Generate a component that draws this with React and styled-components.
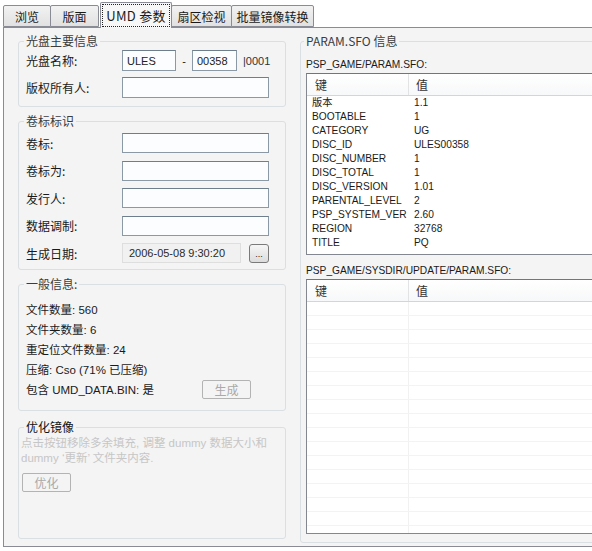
import React from "react";
import styled, { createGlobalStyle } from "styled-components";

const Global = createGlobalStyle`
  body {
    margin: 0;
    background: #ffffff;
  }
`;

const Root = styled.div`
  width: 592px;
  height: 551px;
  overflow: hidden;
  font-family: "Liberation Sans", "Noto Sans CJK SC", sans-serif;
  font-size: 11px;
  color: #1a1a1a;
`;

const TabBar = styled.div`
  display: flex;
  align-items: flex-end;
  height: 27px;
  padding-left: 3px;
  position: relative;
  z-index: 1;
`;

const Tab = styled.div`
  box-sizing: border-box;
  width: ${(p) => p.$w}px;
  height: ${(p) => (p.$active ? 26 : 22)}px;
  margin-left: ${(p) => p.$ml}px;
  margin-bottom: ${(p) => (p.$active ? -1 : 0)}px;
  border: 1px solid #898c95;
  border-bottom: ${(p) => (p.$active ? "none" : "1px solid #898c95")};
  border-radius: 2px 2px 0 0;
  background: ${(p) =>
    p.$active ? "#f7f7f7" : "linear-gradient(#f2f2f2, #e1e1e1)"};
  font-family: "Noto Sans CJK SC", sans-serif;
  font-size: 12px;
  color: #1a1a1a;
  display: flex;
  align-items: center;
  justify-content: center;
  padding: ${(p) => (p.$active ? "1px" : "0")};
`;

const Focus = styled.span`
  flex: 1;
  align-self: stretch;
  display: flex;
  align-items: center;
  justify-content: center;
  border: 1px dotted #222;
  font-size: 13px;
  letter-spacing: 0.3px;
`;

const Panel = styled.div`
  box-sizing: border-box;
  margin-left: 3px;
  width: 660px;
  height: 520px;
  border: 1px solid #898c95;
  background: #f4f4f4;
  display: flex;
  align-items: flex-start;
  gap: 14px;
  padding: 6px 0 0 14px;
`;

const LeftCol = styled.div`
  width: 268px;
  display: flex;
  flex-direction: column;
`;

const Group = styled.fieldset`
  box-sizing: border-box;
  margin: ${(p) => p.$mt || 0}px 0 0;
  padding: ${(p) => p.$pad};
  width: ${(p) => p.$w || 268}px;
  height: ${(p) => (p.$h ? `${p.$h}px` : "auto")};
  border: 1px solid #d9dfe3;
  border-radius: 3px;
  min-width: 0;
`;

const Legend = styled.legend`
  padding: 0 2px;
  margin-left: -2px;
  font-family: "Noto Sans CJK SC", sans-serif;
  font-size: 12px;
  line-height: ${(p) => p.$lh || 14}px;
  color: ${(p) => p.$color || "#3c3c3c"};
`;

const FormRows = styled.div`
  display: flex;
  flex-direction: column;
  gap: ${(p) => p.$gap}px;
`;

const Row = styled.div`
  display: flex;
  align-items: center;
  height: ${(p) => p.$h}px;
`;

const Label = styled.span`
  width: 96px;
  flex-shrink: 0;
  font-family: "Noto Sans CJK SC", sans-serif;
  font-size: 12px;
  color: #1a1a1a;
`;

const Input = styled.div`
  box-sizing: border-box;
  width: ${(p) => p.$w}px;
  height: 100%;
  border: 1px solid #8b99a6;
  border-top-color: #6f7e8c;
  background: #fbfdff;
  padding-left: 4px;
  display: flex;
  align-items: center;
  font-size: 11px;
  color: #222;
`;

const Dash = styled.span`
  width: 16px;
  text-align: center;
`;

const Suffix = styled.span`
  margin-left: 6px;
  color: #333;
`;

const DateField = styled.div`
  box-sizing: border-box;
  width: 119px;
  height: 100%;
  border: 1px solid #dedede;
  background: #f1f1f1;
  padding-left: 6px;
  display: flex;
  align-items: center;
  color: #2a2a2a;
`;

const DotsButton = styled.div`
  box-sizing: border-box;
  width: 20px;
  height: 19px;
  margin-left: 8px;
  border: 1px solid #7a7a7a;
  border-radius: 3px;
  background: linear-gradient(#f6f6f6, #dcdcdc);
  display: flex;
  align-items: flex-end;
  justify-content: center;
  padding-bottom: 3px;
  font-size: 9px;
  line-height: 9px;
  color: #222;
`;

const InfoLines = styled.div`
  display: flex;
  flex-direction: column;
`;

const InfoLine = styled.div`
  height: 20px;
  display: flex;
  align-items: center;
  font-size: 11.5px;
`;

const InfoText = styled.span`
  width: ${(p) => (p.$w ? `${p.$w}px` : "auto")};
  flex-shrink: 0;
`;

const SmallButton = styled.div`
  box-sizing: border-box;
  width: 49px;
  height: 19px;
  margin-left: ${(p) => p.$ml || 0}px;
  margin-top: ${(p) => p.$mt || 0}px;
  border: 1px solid #b3b3b3;
  border-radius: 2px;
  background: #f4f4f4;
  color: #a9a9a9;
  font-family: "Noto Sans CJK SC", sans-serif;
  font-size: 12px;
  display: flex;
  align-items: center;
  justify-content: center;
`;

const Hint = styled.div`
  margin-left: -5px;
  margin-top: 3px;
  font-size: 11.5px;
  line-height: 15px;
  color: #c6c6c6;
  white-space: nowrap;
`;

const Caption = styled.div`
  font-size: 10.2px;
  line-height: 14px;
  color: #1a1a1a;
  margin-top: ${(p) => p.$mt || 0}px;
  margin-bottom: 1px;
`;

const ListBox = styled.div`
  box-sizing: border-box;
  height: ${(p) => p.$h}px;
  border: 1px solid #828790;
  border-top-color: #6b7785;
  background: #ffffff;
  overflow: hidden;
`;

const ListHead = styled.div`
  display: grid;
  grid-template-columns: 102px 1fr;
  height: 22px;
  box-sizing: border-box;
  border-bottom: 1px solid #d5d5d5;
  background: linear-gradient(#ffffff, #f7f8f9);
`;

const HeadCell = styled.div`
  display: flex;
  align-items: center;
  padding-left: ${(p) => p.$pl}px;
  border-right: ${(p) => (p.$divider ? "1px solid #e2e3e5" : "none")};
  font-family: "Noto Sans CJK SC", sans-serif;
  font-size: 12px;
  color: #333;
`;

const ListBody = styled.div`
  height: 100%;
  background-image: ${(p) =>
    p.$grid
      ? "repeating-linear-gradient(to bottom, transparent 0, transparent 13px, #f3f3f3 13px, #f3f3f3 14px), linear-gradient(to right, transparent 101px, #f1f1f1 101px, #f1f1f1 102px, transparent 102px)"
      : "none"};
`;

const ListRow = styled.div`
  display: grid;
  grid-template-columns: 102px 1fr;
  height: 14px;
  line-height: 14px;
  font-size: 10.2px;
  color: #1a1a1a;
`;

const Cell = styled.span`
  padding-left: 5px;
  white-space: nowrap;
  overflow: hidden;
`;

const sfo = [
  ["版本", "1.1"],
  ["BOOTABLE", "1"],
  ["CATEGORY", "UG"],
  ["DISC_ID", "ULES00358"],
  ["DISC_NUMBER", "1"],
  ["DISC_TOTAL", "1"],
  ["DISC_VERSION", "1.01"],
  ["PARENTAL_LEVEL", "2"],
  ["PSP_SYSTEM_VER", "2.60"],
  ["REGION", "32768"],
  ["TITLE", "PQ"],
];

const tabs = [
  { label: "浏览", w: 48, ml: 0 },
  { label: "版面", w: 49, ml: -1 },
  { label: "UMD 参数", w: 72, ml: 1, active: true },
  { label: "扇区检视", w: 61, ml: -1 },
  { label: "批量镜像转换", w: 83, ml: -1 },
];

function App() {
  return (
    <Root>
      <Global />
      <TabBar>
        {tabs.map((t) => (
          <Tab key={t.label} $w={t.w} $ml={t.ml} $active={t.active}>
            {t.active ? <Focus>{t.label}</Focus> : t.label}
          </Tab>
        ))}
      </TabBar>
      <Panel>
        <LeftCol>
          <Group $pad="2px 7px 8px">
            <Legend>光盘主要信息</Legend>
            <FormRows $gap={6}>
              <Row $h={21}>
                <Label>光盘名称:</Label>
                <Input $w={54}>ULES</Input>
                <Dash>-</Dash>
                <Input $w={45}>00358</Input>
                <Suffix>|0001</Suffix>
              </Row>
              <Row $h={21}>
                <Label>版权所有人:</Label>
                <Input $w={147} />
              </Row>
            </FormRows>
          </Group>

          <Group $mt={7} $pad="5px 7px 6px">
            <Legend>卷标标识</Legend>
            <FormRows $gap={7.6}>
              <Row $h={20}>
                <Label>卷标:</Label>
                <Input $w={147} />
              </Row>
              <Row $h={20}>
                <Label>卷标为:</Label>
                <Input $w={147} />
              </Row>
              <Row $h={20}>
                <Label>发行人:</Label>
                <Input $w={147} />
              </Row>
              <Row $h={20}>
                <Label>数据调制:</Label>
                <Input $w={147} />
              </Row>
              <Row $h={20}>
                <Label>生成日期:</Label>
                <DateField>2006-05-08 9:30:20</DateField>
                <DotsButton>...</DotsButton>
              </Row>
            </FormRows>
          </Group>

          <Group $mt={7} $pad="8px 7px 11px">
            <Legend>一般信息:</Legend>
            <InfoLines>
              <InfoLine>文件数量: 560</InfoLine>
              <InfoLine>文件夹数量: 6</InfoLine>
              <InfoLine>重定位文件数量: 24</InfoLine>
              <InfoLine>压缩: Cso (71% 已压缩)</InfoLine>
              <InfoLine>
                <InfoText $w={176}>包含 UMD_DATA.BIN: 是</InfoText>
                <SmallButton>生成</SmallButton>
              </InfoLine>
            </InfoLines>
          </Group>

          <Group $mt={10} $h={118} $pad="0 7px 0">
            <Legend $lh={12} $color="#111">
              优化镜像
            </Legend>
            <Hint>
              点击按钮移除多余填充, 调整 dummy 数据大小和
              <br />
              dummy ‘更新’ 文件夹内容.
            </Hint>
            <SmallButton $ml={-4} $mt={7}>
              优化
            </SmallButton>
          </Group>
        </LeftCol>

        <Group $w={360} $pad="10px 0 8px 5px">
          <Legend>PARAM.SFO 信息</Legend>
          <Caption>PSP_GAME/PARAM.SFO:</Caption>
          <ListBox $h={182}>
            <ListHead>
              <HeadCell $pl={8} $divider>
                键
              </HeadCell>
              <HeadCell $pl={7}>值</HeadCell>
            </ListHead>
            {sfo.map(([k, v]) => (
              <ListRow key={k}>
                <Cell>{k}</Cell>
                <Cell>{v}</Cell>
              </ListRow>
            ))}
          </ListBox>
          <Caption $mt={9}>PSP_GAME/SYSDIR/UPDATE/PARAM.SFO:</Caption>
          <ListBox $h={255}>
            <ListHead>
              <HeadCell $pl={8} $divider>
                键
              </HeadCell>
              <HeadCell $pl={7}>值</HeadCell>
            </ListHead>
            <ListBody $grid />
          </ListBox>
        </Group>
      </Panel>
    </Root>
  );
}

export default App;
